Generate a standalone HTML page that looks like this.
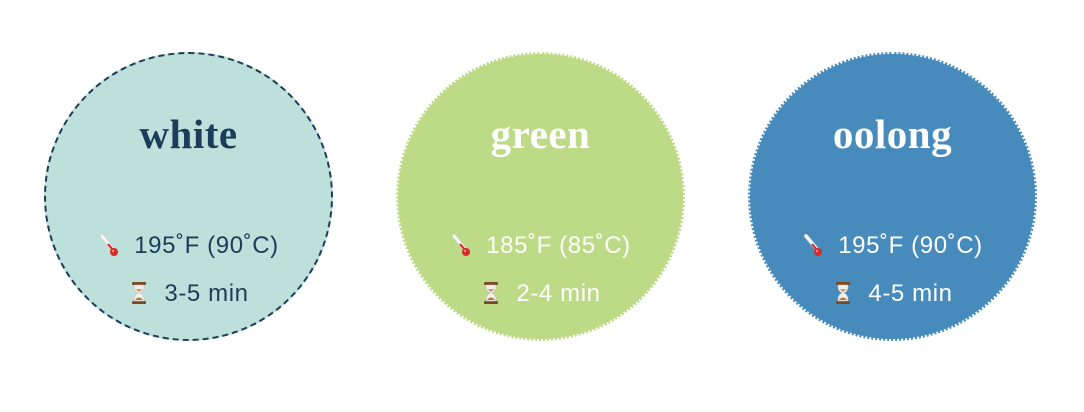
<!DOCTYPE html>
<html><head><style>
body{margin:0;width:1084px;height:412px;background:#fff;overflow:hidden;font-family:"Liberation Sans",sans-serif}
.c{position:absolute;top:52px;width:289px;height:289px;border-radius:50%;box-sizing:border-box;text-align:center}
.t{position:absolute;top:56px;width:100%;font-family:"Liberation Serif",serif;font-weight:bold;font-size:41px;letter-spacing:0.5px}
.l{position:absolute;width:100%;font-size:24px;letter-spacing:0.6px;white-space:nowrap}
.i{display:inline-block;width:22px;height:24px;margin-right:14px;vertical-align:-4px}
</style></head><body>
<svg width="0" height="0" style="position:absolute">
<defs>
<symbol id="th" viewBox="0 0 22 24"><line x1="4" y1="3" x2="14" y2="15" stroke="#ddd" stroke-width="4" stroke-linecap="round"/><line x1="4" y1="3" x2="14" y2="15" stroke="#fff" stroke-width="2" stroke-linecap="round"/><line x1="10" y1="11" x2="15" y2="17" stroke="#d22" stroke-width="2"/><circle cx="16" cy="19" r="4" fill="#d42a2a"/><circle cx="15" cy="18" r="1.2" fill="#f88"/></symbol>
<symbol id="hg" viewBox="0 0 22 24"><rect x="4" y="1" width="14" height="3" rx="1" fill="#7a4a25"/><rect x="4" y="20" width="14" height="3" rx="1" fill="#7a4a25"/><path d="M6 4 L16 4 L16 6 Q16 10 12 12 Q16 14 16 18 L16 20 L6 20 L6 18 Q6 14 10 12 Q6 10 6 6Z" fill="#f3f0ea" stroke="#bbb" stroke-width=".6"/><path d="M8 8 L14 8 Q13 10 11 11 Q9 10 8 8Z" fill="#c9a06a"/><path d="M7 19 Q11 14 15 19Z" fill="#b47a45"/></symbol>
</defs></svg>
<div class="c" style="left:44px;background:#bde0da;border:2px dashed #1b3d5c;color:#1b3d5c">
<div class="t">white</div>
<div class="l" style="top:178px"><svg class="i"><use href="#th"/></svg>195˚F (90˚C)</div>
<div class="l" style="top:226px"><svg class="i"><use href="#hg"/></svg>3-5 min</div></div>
<div class="c" style="left:396px;background:#bdda86;border:2px dotted #fff;color:#fff">
<div class="t">green</div>
<div class="l" style="top:178px"><svg class="i"><use href="#th"/></svg>185˚F (85˚C)</div>
<div class="l" style="top:226px"><svg class="i"><use href="#hg"/></svg>2-4 min</div></div>
<div class="c" style="left:748px;background:#478bbd;border:2px dotted #fff;color:#fff">
<div class="t">oolong</div>
<div class="l" style="top:178px"><svg class="i"><use href="#th"/></svg>195˚F (90˚C)</div>
<div class="l" style="top:226px"><svg class="i"><use href="#hg"/></svg>4-5 min</div></div>
</body></html>
